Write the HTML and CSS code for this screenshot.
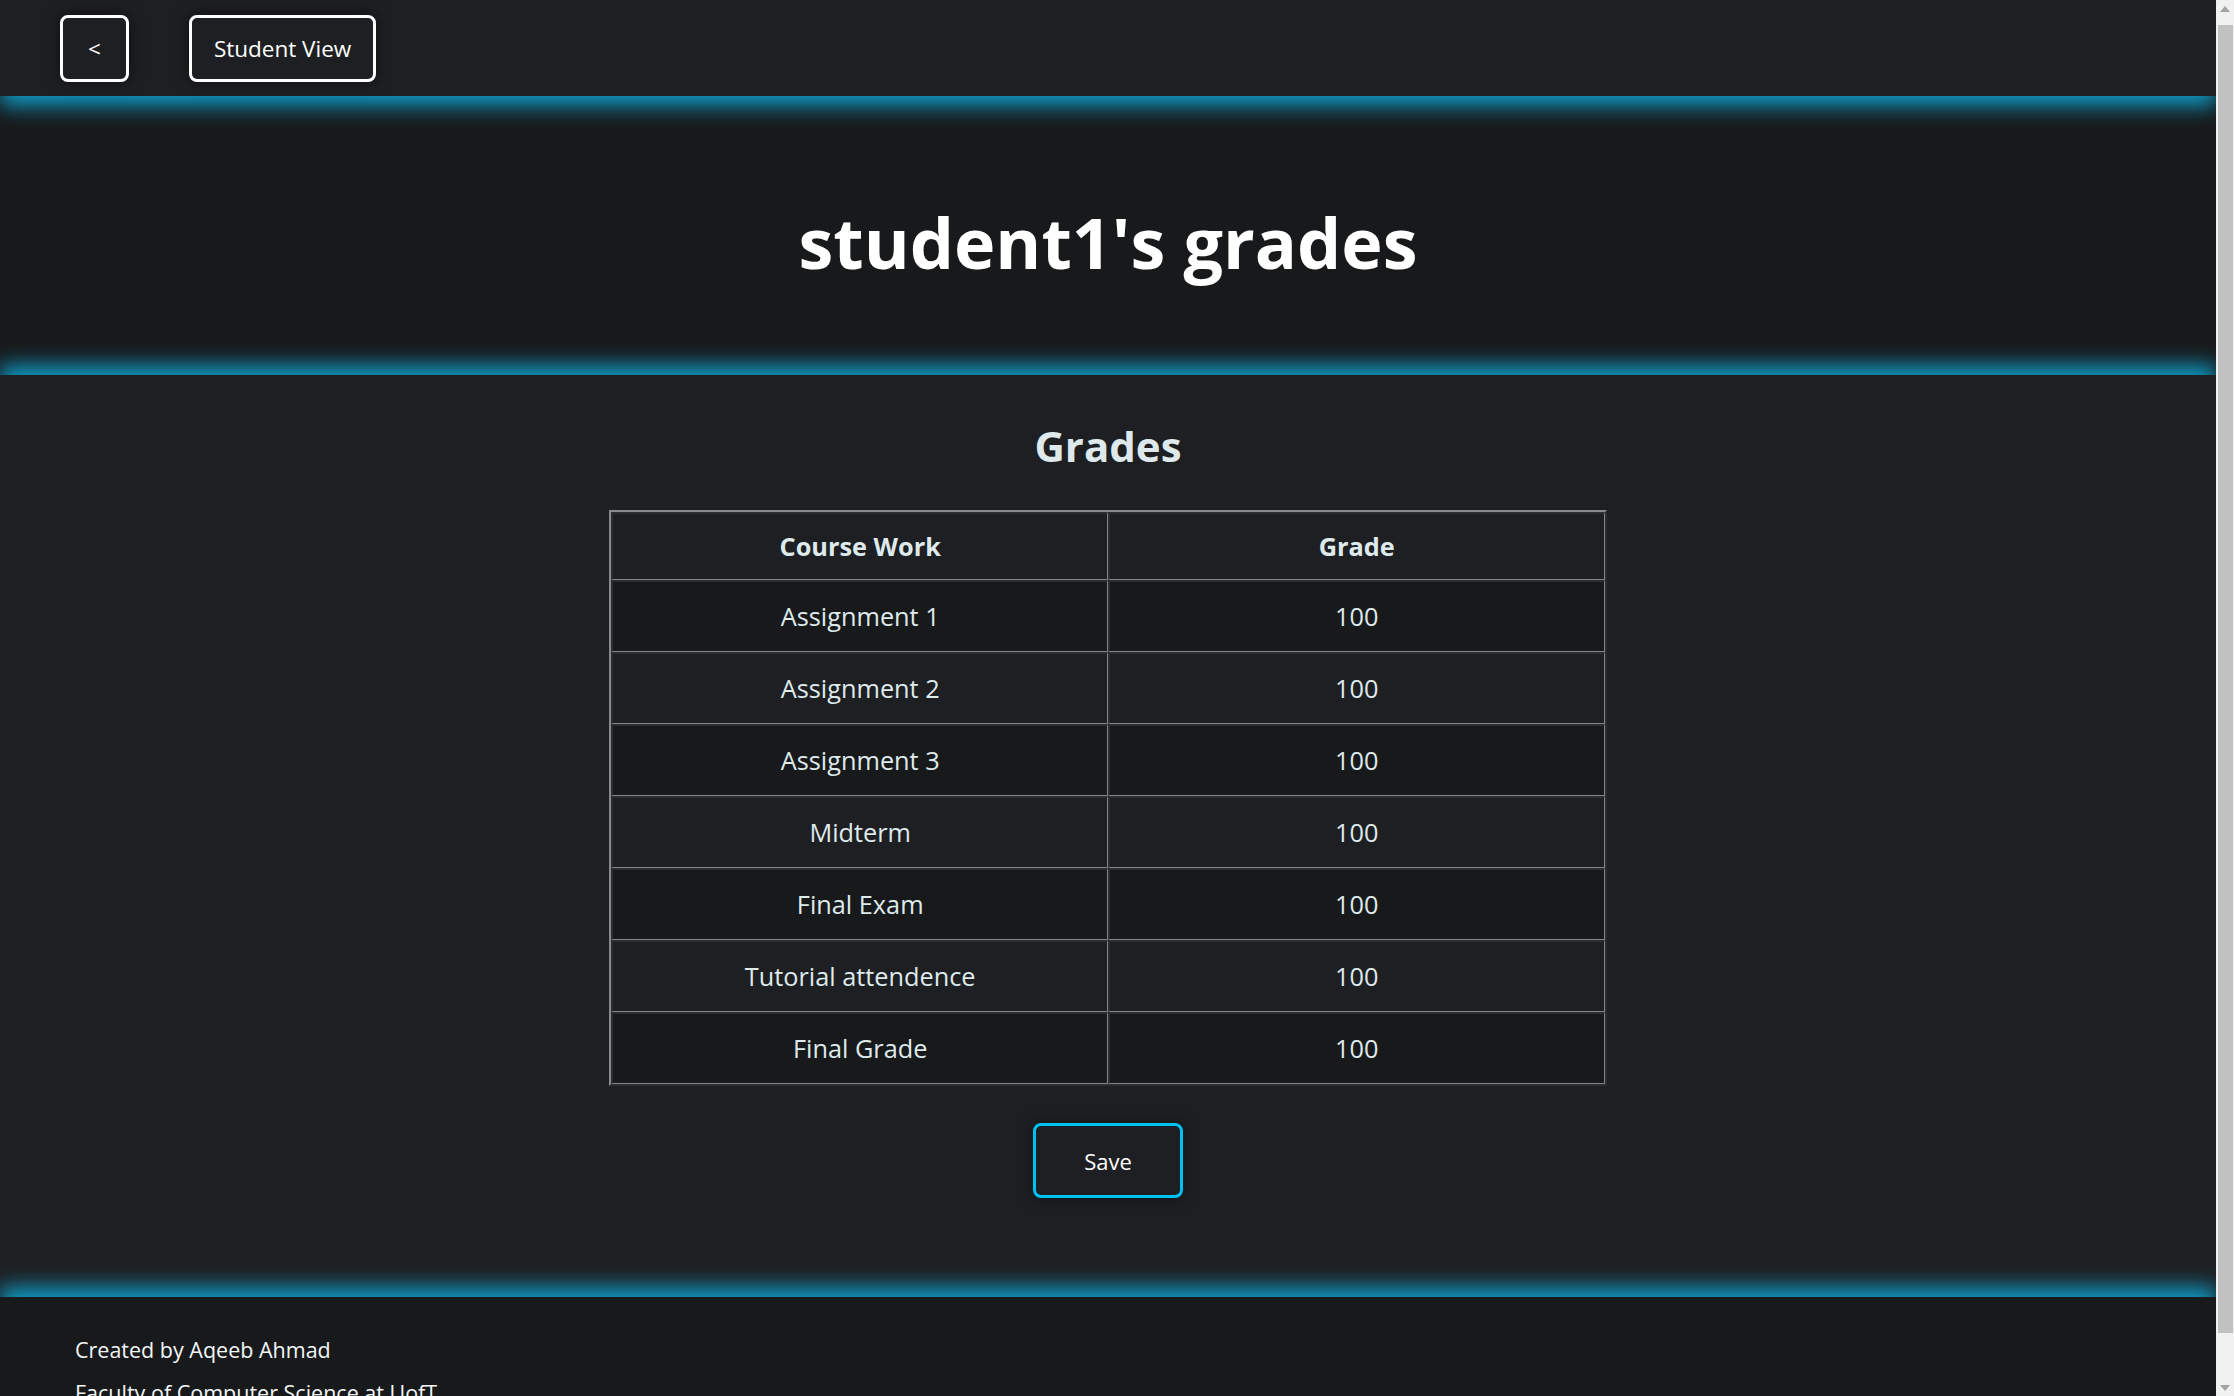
FILE: index.html
```html
<!DOCTYPE html>
<html lang="en">
<head>
<meta charset="utf-8">
<title>student1's grades</title>
<link rel="stylesheet" href="styles.css">
</head>
<body>
<div class="app">
  <div class="page">
    <header class="topbar">
      <button class="nav-btn back">&lt;</button>
      <button class="nav-btn">Student View</button>
    </header>

    <section class="hero">
      <h1>student1's grades</h1>
    </section>

    <main class="content">
      <h2>Grades</h2>
      <table class="grades">
        <thead>
          <tr><th>Course Work</th><th>Grade</th></tr>
        </thead>
        <tbody>
          <tr><td>Assignment 1</td><td>100</td></tr>
          <tr><td>Assignment 2</td><td>100</td></tr>
          <tr><td>Assignment 3</td><td>100</td></tr>
          <tr><td>Midterm</td><td>100</td></tr>
          <tr><td>Final Exam</td><td>100</td></tr>
          <tr><td>Tutorial attendence</td><td>100</td></tr>
          <tr><td>Final Grade</td><td>100</td></tr>
        </tbody>
      </table>
      <button class="save-btn">Save</button>
    </main>

    <footer class="footer">
      <p>Created by Aqeeb Ahmad</p>
      <p>Faculty of Computer Science at UofT</p>
    </footer>
  </div>

  <div class="scrollbar">
    <div class="sb-arrow">
      <svg width="10" height="6" viewBox="0 0 10 6"><polygon points="5,0 10,6 0,6" fill="#a3a3a3"/></svg>
    </div>
    <div class="sb-track"><div class="sb-thumb"></div></div>
    <div class="sb-arrow">
      <svg width="10" height="6" viewBox="0 0 10 6"><polygon points="0,0 10,0 5,6" fill="#a3a3a3"/></svg>
    </div>
  </div>
</div>
</body>
</html>
```

FILE: styles.css
```css
html, body {
  margin: 0;
  padding: 0;
  height: 100%;
}

body {
  background: #1e1f22;
  font-family: "Open Sans", "Noto Sans", sans-serif;
  color: #e6eff1;
  overflow: hidden;
}

.app {
  display: flex;
  height: 100vh;
  overflow: hidden;
}

.page {
  flex: 1;
  min-width: 0;
  overflow: hidden;
}

/* ---------- top bar ---------- */
.topbar {
  position: relative;
  z-index: 1;
  height: 96px;
  display: flex;
  align-items: center;
  gap: 60px;
  padding-left: 60px;
  background: #1e1f22;
  box-shadow: 0 10px 20px #0f9bc5;
}

.nav-btn {
  height: 67px;
  padding: 0 22px;
  background: #1e1f22;
  color: #ffffff;
  border: 3px solid #ffffff;
  border-radius: 8px;
  font-family: inherit;
  font-size: 22.5px;
  box-shadow: 0 0 14px rgba(0, 0, 0, 0.55);
}

.nav-btn.back {
  padding: 0 25px;
}

/* ---------- hero ---------- */
.hero {
  height: 279px;
  box-sizing: border-box;
  padding-top: 12px;
  display: flex;
  align-items: center;
  justify-content: center;
  background: #18191b;
}

.hero h1 {
  margin: 0;
  font-size: 70px;
  line-height: 1;
  font-weight: 700;
  color: #ffffff;
}

/* ---------- main ---------- */
.content {
  display: flex;
  flex-direction: column;
  align-items: center;
  padding: 42px 0 99px;
  background: #1e1f22;
  box-shadow: 0 -10px 20px #0f9bc5;
}

.content h2 {
  margin: 0 0 35px;
  font-size: 42px;
  line-height: 58px;
  font-weight: 700;
  color: #dfe9eb;
}

.grades {
  width: 45%;
  border-collapse: separate;
  border-spacing: 0;
  border-style: solid;
  border-width: 2px;
  border-color: #8a8a8a #2c2d30 #2c2d30 #8a8a8a;
  font-size: 25.3px;
  color: #dfeaec;
}

.grades th,
.grades td {
  width: 50%;
  text-align: center;
  line-height: 35px;
  border-style: solid;
  border-width: 2px 1px 1px 2px;
  border-color: #2c2d30 #858585 #858585 #2c2d30;
}

.grades th {
  padding: 15px 17px;
  font-weight: 700;
}

.grades td {
  padding: 17px;
}

.grades tbody tr:nth-child(odd) {
  background: #18191b;
}

.save-btn {
  margin-top: 37px;
  width: 150px;
  height: 75px;
  background: #1e1f22;
  color: #ffffff;
  border: 3px solid #00c2f2;
  border-radius: 8px;
  font-family: inherit;
  font-size: 22px;
  box-shadow: 0 0 14px rgba(0, 0, 0, 0.45);
}

/* ---------- footer ---------- */
.footer {
  padding: 31px 75px;
  background: #18191b;
  box-shadow: 0 -10px 20px #0f9bc5;
  color: #f2f6f7;
}

.footer p {
  margin: 0;
  font-size: 21.5px;
  line-height: 43px;
}

/* ---------- scrollbar ---------- */
.scrollbar {
  width: 18px;
  flex: none;
  display: flex;
  flex-direction: column;
  background: #f1f1f1;
}

.sb-arrow {
  height: 17px;
  display: flex;
  align-items: center;
  justify-content: center;
}

.sb-track {
  flex: 1;
  padding: 8px 1px 46px 2px;
}

.sb-thumb {
  height: 100%;
  background: #c1c1c1;
}
```
